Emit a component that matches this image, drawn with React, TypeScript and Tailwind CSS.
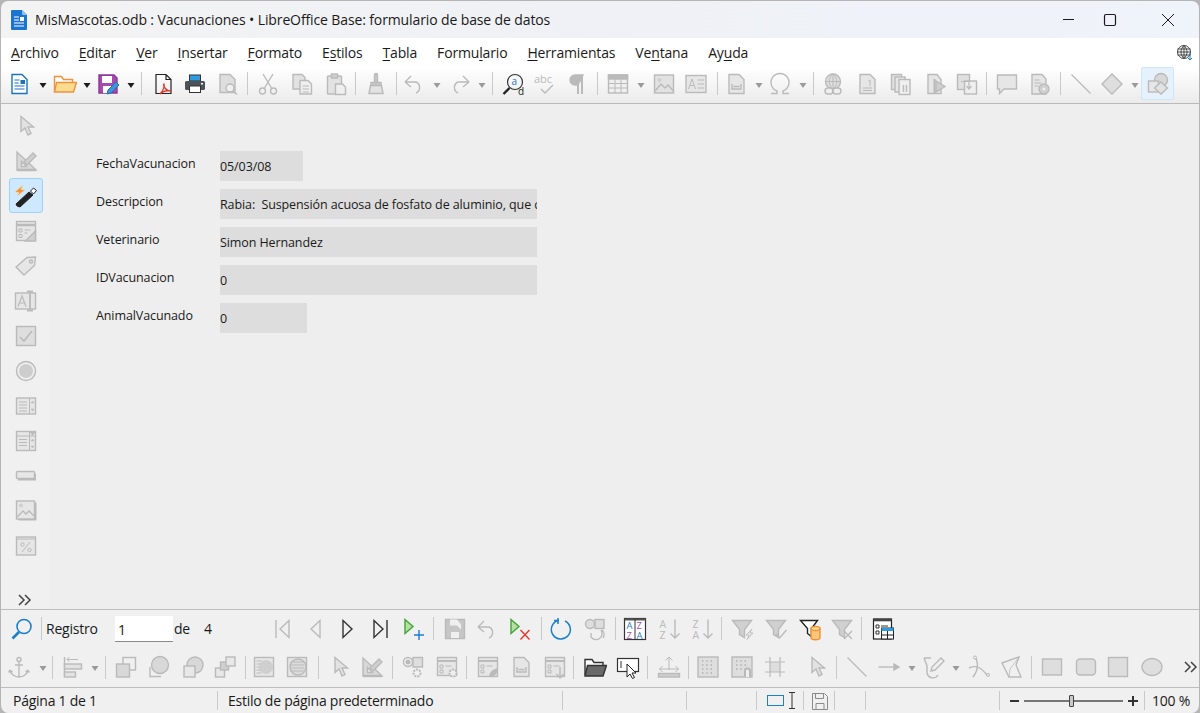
import type { ReactNode } from "react";

type P = { className?: string };

const Svg = ({ className = "", children }: P & { children: ReactNode }) => (
  <svg
    width="24"
    height="24"
    viewBox="0 0 24 24"
    fill="none"
    stroke="#bababa"
    strokeWidth="1.4"
    className={`shrink-0 ${className}`}
  >
    {children}
  </svg>
);

const Sep = ({ className = "" }: P) => <div className={`h-[23px] w-px shrink-0 bg-[#c9c9c9] ${className}`} />;

const Drop = ({ className = "", on }: P & { on?: boolean }) => (
  <svg width="8" height="5" viewBox="0 0 8 5" className={`mt-[3px] shrink-0 ${className}`}>
    <path d="M0.5 0h7L4 5z" fill={on ? "#1c1c1c" : "#9a9a9a"} />
  </svg>
);

/* ---- standard toolbar ---- */
const NewDoc = ({ className }: P) => (
  <Svg className={className}>
    <path d="M5 2.5h10l5 5v14H5z" fill="#fff" stroke="#1b75bc" />
    <path d="M7.5 8h5M7.5 11h4M7.5 14h10M7.5 17h10" stroke="#1b75bc" strokeWidth="1.2" />
    <rect x="13.5" y="8" width="4.5" height="4" fill="#1b75bc" stroke="none" />
  </Svg>
);
const Folder = ({ className }: P) => (
  <Svg className={className}>
    <path d="M1.5 20V4.5h7l2 3h9v3" fill="#fff" stroke="#f0913c" />
    <path d="M1.5 20l2-9.5h20L20.5 20z" fill="#fbdc8e" stroke="#f0913c" />
  </Svg>
);
const Save = ({ className }: P) => (
  <Svg className={className}>
    <path d="M3 3h15l3 3v15H3z" fill="#a64cb0" stroke="#8b3597" />
    <rect x="6" y="4" width="10" height="7" fill="#fff" stroke="none" />
    <rect x="7" y="14" width="8" height="7" fill="#fff" stroke="none" />
    <path d="M11 22l1-4 8-8 3 3-8 8z" fill="#3f93d6" stroke="#1b75bc" strokeWidth="1" />
  </Svg>
);
const Pdf = ({ className }: P) => (
  <Svg className={className}>
    <path d="M5 2.5h10l5 5v14H5zM15 2.5v5h5" stroke="#222" strokeWidth="1.2" />
    <path d="M9 22c3-3 5-8 4-10-1 1 1 7 7 7-3-1-8 0-11 3z" stroke="#e0372d" strokeWidth="1.3" />
  </Svg>
);
const Printer = ({ className }: P) => (
  <Svg className={className}>
    <rect x="6.5" y="3" width="11" height="6" fill="#2c9be0" stroke="#333" strokeWidth="1" />
    <rect x="2" y="9" width="20" height="9" rx="1.5" fill="#4c5258" stroke="none" />
    <rect x="6.5" y="14" width="11" height="6.5" fill="#fff" stroke="#333" strokeWidth="1" />
    <rect x="18" y="11" width="2" height="1.5" fill="#fff" stroke="none" />
  </Svg>
);
const Preview = ({ className }: P) => (
  <Svg className={className}>
    <path d="M4 2.5h10l5 5v13H4z" fill="#dedede" />
    <circle cx="14" cy="16" r="4" fill="#efefef" />
    <path d="M17 19l4 3.5" />
  </Svg>
);
const Cut = ({ className }: P) => (
  <Svg className={className}>
    <path d="M7 2l8.500 14M17 2L8.500 16" />
    <circle cx="6.500" cy="19" r="3" />
    <circle cx="17.500" cy="19" r="3" />
  </Svg>
);
const Copy = ({ className }: P) => (
  <Svg className={className}>
    <path d="M3 2.500h9l3 3V17H3z" fill="#e2e2e2" />
    <path d="M10 8.500h8l3.500 3.500v10H10z" fill="#efefef" />
    <path d="M12.500 14h6.500M12.500 17h6.500M12.500 20h6.500" strokeWidth="1" />
  </Svg>
);
const Paste = ({ className }: P) => (
  <Svg className={className}>
    <rect x="3.500" y="4" width="14" height="18" rx="1" fill="#e2e2e2" />
    <rect x="7.500" y="2" width="6" height="4" fill="#cfcfcf" />
    <path d="M11.500 12h7l3 3v7.500h-10z" fill="#efefef" />
  </Svg>
);
const Brush = ({ className }: P) => (
  <Svg className={className}>
    <rect x="10.500" y="1.500" width="3" height="10" rx="1.500" fill="#c8c8c8" />
    <rect x="7" y="10.500" width="10" height="3" fill="#c8c8c8" />
    <path d="M6.500 13.500h11l1.500 8H5z" fill="#e2e2e2" />
  </Svg>
);
const Undo = ({ className }: P) => (
  <Svg className={className}>
    <path d="M3 10l6-6M3 10l6 5M3 10h11a6 6 0 0 1 0 11" />
  </Svg>
);
const Redo = ({ className }: P) => (
  <Svg className={className}>
    <path d="M21 10l-6-6M21 10l-6 5M21 10H10a6 6 0 0 0 0 11" />
  </Svg>
);
const FindReplace = ({ className }: P) => (
  <Svg className={className}>
    <circle cx="13" cy="10" r="7.500" stroke="#333" strokeWidth="1.200" />
    <path d="M7.500 16L1.500 22" stroke="#222" strokeWidth="2.400" />
    <text x="9.500" y="13" fontSize="10" fontFamily="Open Sans" fill="#1b75bc" stroke="none">a</text>
    <text x="16" y="23" fontSize="10" fontFamily="Open Sans" fill="#222" stroke="none">d</text>
  </Svg>
);
const Spell = ({ className }: P) => (
  <Svg className={className}>
    <text x="1" y="11" fontSize="11" fontFamily="Open Sans" fill="#bababa" stroke="none">abc</text>
    <path d="M8 17l4 4 8-8" />
  </Svg>
);
const Pilcrow = ({ className }: P) => (
  <Svg className={className}>
    <path d="M17 3v19M13 3v19" strokeWidth="2" />
    <path d="M18 3h-8a5 5 0 0 0 0 10h3z" fill="#bababa" />
  </Svg>
);
const Table = ({ className }: P) => (
  <Svg className={className}>
    <rect x="2.500" y="3" width="19" height="18" fill="#efefef" />
    <rect x="2.500" y="3" width="19" height="4" fill="#bababa" />
    <path d="M2.500 11.500h19M2.500 16h19M9 7v14M15 7v14" strokeWidth="1" />
  </Svg>
);
const Image = ({ className }: P) => (
  <Svg className={className}>
    <rect x="2.500" y="3" width="19" height="18" fill="#e2e2e2" />
    <circle cx="7.500" cy="8" r="2" fill="#cfcfcf" stroke="none" />
    <path d="M3 19l6-7 4 4 3-3 5.500 6" />
  </Svg>
);
const TextBox = ({ className }: P) => (
  <Svg className={className}>
    <rect x="2" y="3.500" width="20" height="17" fill="#e6e6e6" />
    <path d="M4.500 17L8 7l3.500 10M6 13.500h4M13.500 8h6.500M13.500 12h6.500M13.500 16h6.500" strokeWidth="1" />
  </Svg>
);
const Field = ({ className }: P) => (
  <Svg className={className}>
    <path d="M5 2.500h10l5 5v14H5z" fill="#e6e6e6" />
    <path d="M8 12v5h9v-5M9.500 14.500h6" />
  </Svg>
);
const Omega = ({ className }: P) => (
  <Svg className={className}>
    <path d="M3 21.500h6v-2.500a9 9 0 1 1 6 0v2.500h6" />
  </Svg>
);
const Hyperlink = ({ className }: P) => (
  <Svg className={className}>
    <circle cx="12" cy="9.500" r="7.500" fill="#dedede" />
    <path d="M4.500 9.500h15M12 2v15M12 2c-5 4-5 11 0 15M12 2c5 4 5 11 0 15" strokeWidth="1" />
    <rect x="4" y="16" width="8" height="6" rx="3" fill="#efefef" />
    <rect x="12" y="16" width="8" height="6" rx="3" fill="#efefef" />
  </Svg>
);
const Footnote = ({ className }: P) => (
  <Svg className={className}>
    <path d="M5 2.500h10l5 5v14H5z" fill="#e6e6e6" />
    <path d="M8 18.500h9M8 16h9M13.500 9l1.500-1v6" strokeWidth="1" />
  </Svg>
);
const IndexDoc = ({ className }: P) => (
  <Svg className={className}>
    <rect x="2.500" y="2.500" width="10" height="15" fill="#e0e0e0" />
    <rect x="6" y="5" width="10" height="15" fill="#e6e6e6" />
    <rect x="10" y="7.500" width="11" height="15" fill="#efefef" />
    <path d="M14.500 13v7M17.500 13v7" />
  </Svg>
);
const Bookmark = ({ className }: P) => (
  <Svg className={className}>
    <path d="M5 2.500h9l4 5v14H5z" fill="#e6e6e6" />
    <path d="M11.500 7v15" strokeWidth="2" />
    <path d="M13 9l9 5.500-9 5.500z" fill="#cfcfcf" />
  </Svg>
);
const CrossRef = ({ className }: P) => (
  <Svg className={className}>
    <rect x="2.500" y="2.500" width="12" height="15" fill="#e0e0e0" />
    <rect x="9.500" y="9" width="12" height="13" fill="#efefef" />
    <path d="M6 9.500h8v7M11.500 14l2.500 3 2.500-3" strokeWidth="1.200" />
  </Svg>
);
const Comment = ({ className }: P) => (
  <Svg className={className}>
    <path d="M2.500 3h19v14H9l-4.500 4.500V17h-2z" fill="#e6e6e6" />
  </Svg>
);
const Track = ({ className }: P) => (
  <Svg className={className}>
    <path d="M4 2.500h10l4 4.500v15H4z" fill="#e6e6e6" />
    <path d="M6.500 8h5M6.500 11h7M6.500 14h4" strokeWidth="1" />
    <circle cx="16" cy="17" r="5" fill="#cfcfcf" />
    <circle cx="16" cy="17" r="1.500" fill="#efefef" stroke="none" />
  </Svg>
);
const Line = ({ className }: P) => (
  <Svg className={className}>
    <path d="M2.500 2.500l19 19" strokeWidth="1.200" />
  </Svg>
);
const Diamond = ({ className }: P) => (
  <Svg className={className}>
    <path d="M12 2l10 10-10 10L2 12z" fill="#dedede" />
  </Svg>
);
const Shapes = ({ className }: P) => (
  <Svg className={className}>
    <circle cx="15" cy="8" r="6.500" fill="#d8d8d8" />
    <rect x="2.500" y="9" width="10" height="11" fill="#e6e6e6" />
    <path d="M15 10l6.500 6-6.500 6-6.500-6z" fill="#e2e2e2" />
  </Svg>
);

/* ---- form design ---- */
const Pointer = ({ className }: P) => (
  <Svg className={className}>
    <path d="M7 2.500v15l4-3.500 3 7 3-1.500-3-6.500h5.500z" fill="#e2e2e2" />
  </Svg>
);
const DesignMode = ({ className }: P) => (
  <Svg className={className}>
    <path d="M3 3v18h19l-4-4z" fill="#d8d8d8" />
    <path d="M7.500 12.500v5h5z" fill="#efefef" />
    <path d="M10 13L19 4l3 3-9 9z" fill="#cfcfcf" />
    <path d="M3 21h19" strokeWidth="2.400" />
  </Svg>
);
const Wizard = ({ className }: P) => (
  <Svg className={className}>
    <path d="M3 22l-1-2L15 8l4 3L6 23z" fill="#222" stroke="#222" strokeWidth="1" />
    <path d="M16.500 7l3-3 3 2.500-3 3.500z" fill="#fff" stroke="#222" strokeWidth="1" />
    <path d="M9 1L1 8l4 .500L3 12l8-6-4-.500z" fill="#f0913c" stroke="#fbdc8e" strokeWidth="0.600" />
  </Svg>
);
const FormProps = ({ className }: P) => (
  <Svg className={className}>
    <rect x="2.500" y="2.500" width="19" height="19" fill="#e6e6e6" />
    <path d="M2.500 6h19" strokeWidth="2.400" />
    <path d="M5 10h3v3H5zM5 15.500h3v3H5zM10.500 11h6M10.500 14h3" strokeWidth="1" />
    <path d="M21.500 12v10h-10z" fill="#cfcfcf" />
  </Svg>
);
const Tag = ({ className }: P) => (
  <Svg className={className}>
    <path d="M2 13L13 3.500l8.500-.500-1 8.500L10 21z" fill="#e6e6e6" />
    <circle cx="17" cy="7.500" r="1.500" fill="#efefef" />
  </Svg>
);
const TextField = ({ className }: P) => (
  <Svg className={className}>
    <rect x="1.500" y="4" width="20" height="16" fill="#e6e6e6" />
    <path d="M4 17.500L8 7l4 10.500M5.500 14h5" strokeWidth="1.200" />
    <path d="M13 2.500h6M13 21.500h6M16 2.500v19" strokeWidth="1.800" />
  </Svg>
);
const CheckBox = ({ className }: P) => (
  <Svg className={className}>
    <rect x="2.500" y="2.500" width="19" height="19" fill="#dedede" />
    <path d="M6 13l4 4 8-10" strokeWidth="1.600" />
  </Svg>
);
const Radio = ({ className }: P) => (
  <Svg className={className}>
    <circle cx="12" cy="12" r="9.500" fill="#efefef" />
    <circle cx="12" cy="12" r="7" fill="#cdcdcd" stroke="none" />
  </Svg>
);
const ListBox = ({ className }: P) => (
  <Svg className={className}>
    <rect x="2.500" y="4" width="19" height="16" fill="#e6e6e6" />
    <path d="M15.500 4v16M5 8h8M5 11h8M5 14h8M5 17h8" strokeWidth="1" />
    <path d="M17 9l1.500-2 1.500 2zM17 15l1.500 2 1.500-2z" fill="#bababa" strokeWidth="0.500" />
  </Svg>
);
const ComboBox = ({ className }: P) => (
  <Svg className={className}>
    <rect x="2.500" y="2.500" width="19" height="19" fill="#e6e6e6" />
    <path d="M15.500 2.500v19M2.500 7h19M5 10.500h8M5 13.500h8M5 16.500h8" strokeWidth="1" />
    <path d="M16 3l2.500 3.500L21 3z" fill="#bababa" strokeWidth="0.500" />
    <path d="M17 12l1.500-2 1.500 2zM17 17l1.500 2 1.500-2z" fill="#bababa" strokeWidth="0.500" />
  </Svg>
);
const PushButton = ({ className }: P) => (
  <Svg className={className}>
    <rect x="4" y="9.500" width="18" height="7" fill="#bababa" stroke="none" />
    <rect x="2.500" y="7.500" width="18" height="7" rx="1" fill="#e6e6e6" />
  </Svg>
);
const ImageButton = ({ className }: P) => (
  <Svg className={className}>
    <rect x="4.500" y="3.500" width="18" height="18" fill="#bababa" stroke="none" />
    <rect x="2.500" y="2" width="18" height="18" fill="#e6e6e6" />
    <circle cx="7" cy="6.500" r="2" fill="#cfcfcf" stroke="none" />
    <path d="M3 18l6-6 3 3 3-3 5 5" />
  </Svg>
);
const Formatted = ({ className }: P) => (
  <Svg className={className}>
    <rect x="2.500" y="3" width="19" height="18" fill="#e6e6e6" />
    <path d="M2.500 5h19M8 18l8-10" strokeWidth="1" />
    <circle cx="8.500" cy="10.500" r="1.700" strokeWidth="1" />
    <circle cx="15.500" cy="16" r="1.700" strokeWidth="1" />
  </Svg>
);
const Chevrons = ({ className = "", w = 24 }: P & { w?: number }) => (
  <svg width={w} height="24" viewBox={`0 0 ${w} 24`} fill="none" stroke="#444" strokeWidth="1.500" className={`shrink-0 ${className}`}>
    <path d={`M${w / 2 - 6} 7l5 5-5 5M${w / 2} 7l5 5-5 5`} />
  </svg>
);

/* ---- record bar ---- */
const Search = ({ className }: P) => (
  <Svg className={className}>
    <circle cx="14" cy="9.500" r="7" stroke="#1b7fcc" strokeWidth="1.600" />
    <path d="M9 15l-6.500 6.500" stroke="#1b7fcc" strokeWidth="2.600" />
  </Svg>
);
const NavFirst = ({ className }: P) => (
  <Svg className={className}>
    <path d="M5 3v18" />
    <path d="M18 3.500L9 12l9 8.500z" />
  </Svg>
);
const NavPrev = ({ className }: P) => (
  <Svg className={className}>
    <path d="M17 3.500L8 12l9 8.500z" />
  </Svg>
);
const NavNext = ({ className }: P) => (
  <Svg className={className}>
    <path d="M7 3.500l9 8.500-9 8.500z" stroke="#333" />
  </Svg>
);
const NavLast = ({ className }: P) => (
  <Svg className={className}>
    <path d="M6 3.500l9 8.500-9 8.500z" stroke="#333" />
    <path d="M19 3v18" stroke="#333" />
  </Svg>
);
const NavNew = ({ className }: P) => (
  <Svg className={className}>
    <path d="M3 2.500l8 7-8 7z" fill="#b7dfa5" stroke="#3fa535" />
    <path d="M17 13v10M12 18h10" stroke="#1b7fcc" />
  </Svg>
);
const SaveRecord = ({ className }: P) => (
  <Svg className={className}>
    <path d="M2.500 2.500h19v19h-19z" fill="#c6c6c6" />
    <path d="M7 2.500h7l4 5v5l-4-4H7z" fill="#efefef" stroke="none" />
    <rect x="8" y="15" width="8" height="6" fill="#efefef" stroke="none" />
  </Svg>
);
const DelRecord = ({ className }: P) => (
  <Svg className={className}>
    <path d="M3 2.500l8 7-8 7z" fill="#b7dfa5" stroke="#3fa535" />
    <path d="M12.500 13l9 9.500M21.500 13l-9 9.500" stroke="#e0372d" />
  </Svg>
);
const Refresh = ({ className }: P) => (
  <Svg className={className}>
    <path d="M9 3.500A9.500 9.500 0 1 0 16 4" stroke="#1b7fcc" strokeWidth="1.500" />
    <path d="M9 1v6M5 3.500h5" stroke="#1b7fcc" strokeWidth="1.500" />
  </Svg>
);
const RefreshCtl = ({ className }: P) => (
  <Svg className={className}>
    <circle cx="7" cy="7" r="4.500" fill="#dedede" />
    <rect x="12" y="2.500" width="9" height="9" fill="#dedede" />
    <path d="M8 20a6 6 0 0 0 10-7M8 20v-4M20 21a6 6 0 0 0-1-8" />
  </Svg>
);
const Sort = ({ className }: P) => (
  <Svg className={className}>
    <rect x="1.500" y="1.500" width="21" height="21" fill="#fff" stroke="#333" strokeWidth="1.200" />
    <path d="M1.500 2.500h21" stroke="#555" strokeWidth="2" />
    <path d="M12 2v20" stroke="#333" strokeWidth="1" />
    <text x="3.500" y="12" fontSize="9.500" fontFamily="Open Sans" fill="#1b7fcc" stroke="none">A</text>
    <text x="3.500" y="21.500" fontSize="9.500" fontFamily="Open Sans" fill="#a64cb0" stroke="none">Z</text>
    <text x="13.500" y="12" fontSize="9.500" fontFamily="Open Sans" fill="#a64cb0" stroke="none">Z</text>
    <text x="13.500" y="21.500" fontSize="9.500" fontFamily="Open Sans" fill="#1b7fcc" stroke="none">A</text>
  </Svg>
);
const SortAZ = ({ top, bottom, className }: P & { top: string; bottom: string }) => (
  <Svg className={className}>
    <text x="1.500" y="11" fontSize="10.500" fontFamily="Open Sans" fill="#bababa" stroke="none">{top}</text>
    <text x="1.500" y="22" fontSize="10.500" fontFamily="Open Sans" fill="#bababa" stroke="none">{bottom}</text>
    <path d="M17 2.500V21M12.500 16.500L17 21l4.500-4.500" />
  </Svg>
);
const FunnelPath = "M1.500 3.500h19l-7 9v8l-5-3v-5z";
const AutoFilter = ({ className }: P) => (
  <Svg className={className}>
    <path d={FunnelPath} fill="#d0d0d0" />
    <path d="M21 12l-6 6 3 .500-2 4 6-6.500-3-.500z" fill="#e2e2e2" strokeWidth="0.800" />
  </Svg>
);
const StdFilter = ({ className }: P) => (
  <Svg className={className}>
    <path d={FunnelPath} fill="#d0d0d0" />
    <path d="M11 17l3.500 4 7-8" />
  </Svg>
);
const DbFilter = ({ className }: P) => (
  <Svg className={className}>
    <path d="M1.500 3.500h17l-6 8v8l-4-3v-5z" fill="#fff" stroke="#222" />
    <path d="M12 11.500v9a4 2 0 0 0 9 0v-9z" fill="#fbc67a" stroke="#f0913c" />
    <ellipse cx="16.500" cy="11.500" rx="4.500" ry="2" fill="#fbdc8e" stroke="#f0913c" />
  </Svg>
);
const RemoveFilter = ({ className }: P) => (
  <Svg className={className}>
    <path d={FunnelPath} fill="#d0d0d0" />
    <path d="M13 14l8 8M21 14l-8 8" />
  </Svg>
);
const DataTable = ({ className }: P) => (
  <Svg className={className}>
    <rect x="2.500" y="2" width="18" height="20" fill="#fff" stroke="#222" strokeWidth="1.200" />
    <path d="M2.500 3h18" stroke="#444" strokeWidth="2.600" />
    <path d="M5 8h3v3H5zM5 14h3v3H5zM10 9h7" stroke="#333" strokeWidth="1" />
    <rect x="10.500" y="11" width="12" height="11" fill="#fff" stroke="#222" strokeWidth="1" />
    <rect x="10.500" y="11" width="12" height="3" fill="#2c9be0" stroke="none" />
    <path d="M16.500 14v8M10.500 18h12" stroke="#222" strokeWidth="1" />
  </Svg>
);

/* ---- form design bar ---- */
const Anchor = ({ className }: P) => (
  <Svg className={className}>
    <circle cx="12" cy="4.500" r="2" />
    <path d="M12 6.500V22M8 10h8M3 15c0 4 5 7 9 7s9-3 9-7M3 15l-1.500 2.500M3 15l2.500 2M21 15l1.500 2.500M21 15l-2.500 2" />
  </Svg>
);
const Align = ({ className }: P) => (
  <Svg className={className}>
    <path d="M3.500 2v20" />
    <rect x="3.500" y="9" width="17" height="5" fill="#e2e2e2" />
    <rect x="3.500" y="17" width="11" height="5" fill="#e2e2e2" />
    <path d="M6 4.500h11M6 4.500l2.500-2.500M6 4.500L8.500 7" strokeWidth="1" />
  </Svg>
);
const ToFront = ({ className }: P) => (
  <Svg className={className}>
    <rect x="9" y="2.500" width="12.500" height="12.500" />
    <rect x="2.500" y="9" width="13" height="13" fill="#d8d8d8" />
  </Svg>
);
const ToBack = ({ className }: P) => (
  <Svg className={className}>
    <circle cx="13" cy="10" r="8.500" fill="#d8d8d8" />
    <path d="M3 12v9.500h11" />
  </Svg>
);
const Forward = ({ className }: P) => (
  <Svg className={className}>
    <circle cx="14" cy="10" r="8" fill="#d8d8d8" />
    <rect x="3" y="11" width="11" height="11" fill="#e8e8e8" />
  </Svg>
);
const Backward = ({ className }: P) => (
  <Svg className={className}>
    <rect x="2.500" y="13" width="9" height="9" fill="#e8e8e8" />
    <rect x="7.500" y="7" width="8" height="8" fill="#cfcfcf" />
    <rect x="13" y="2" width="9" height="9" fill="#e8e8e8" />
  </Svg>
);
const WrapL = ({ className }: P) => (
  <Svg className={className}>
    <rect x="2.500" y="2.500" width="19" height="19" fill="#e6e6e6" />
    <circle cx="14" cy="12" r="7" fill="#cfcfcf" stroke="none" />
    <path d="M4.500 6h5M4.500 9h4M4.500 12h3M4.500 15h4M4.500 18h5" strokeWidth="1" />
  </Svg>
);
const WrapR = ({ className }: P) => (
  <Svg className={className}>
    <rect x="2.500" y="2.500" width="19" height="19" fill="#e6e6e6" />
    <circle cx="13" cy="12" r="8" fill="#dcdcdc" />
    <path d="M5 7h14M5 10h14M5 13h14M5 16h14" strokeWidth="1" />
  </Svg>
);
const ControlProps = ({ className }: P) => (
  <Svg className={className}>
    <circle cx="7" cy="7" r="4.500" />
    <circle cx="7" cy="7" r="2.500" fill="#bababa" stroke="none" />
    <rect x="12" y="2.500" width="9.500" height="9.500" fill="#dedede" />
    <circle cx="16" cy="18" r="3.500" strokeDasharray="2 1" strokeWidth="2" />
  </Svg>
);
const FormProp2 = ({ className }: P) => (
  <Svg className={className}>
    <rect x="2.500" y="2.500" width="19" height="18" fill="#e6e6e6" />
    <path d="M2.500 6h19" strokeWidth="2" />
    <path d="M5 10h3v3H5zM5 15h3v3H5zM10.500 11h6" strokeWidth="1" />
    <circle cx="18" cy="18" r="3.500" fill="#efefef" strokeDasharray="2 1" strokeWidth="2" />
  </Svg>
);
const FormLeaf = ({ className }: P) => (
  <Svg className={className}>
    <rect x="2.500" y="2.500" width="19" height="19" fill="#e6e6e6" />
    <path d="M2.500 6h19" strokeWidth="2" />
    <path d="M5 10h3v3H5zM5 15h3v3H5zM10.500 11h6" strokeWidth="1" />
    <path d="M13 22c0-5 4-8 9-9 0 5-3 9-9 9z" fill="#bababa" stroke="none" />
  </Svg>
);
const FormDown = ({ className }: P) => (
  <Svg className={className}>
    <rect x="2.500" y="2.500" width="19" height="19" fill="#e6e6e6" />
    <path d="M2.500 6h19" strokeWidth="2" />
    <path d="M5 10h3v3H5zM5 15h3v3H5zM10.500 11h6" strokeWidth="1" />
    <path d="M17 12v11M13.500 19l3.500 4 3.500-4" />
  </Svg>
);
const OpenFolder = ({ className }: P) => (
  <Svg className={className}>
    <path d="M2 20V4.500h7l2 3h9v3" fill="#fff" stroke="#333" />
    <path d="M2 21l2.500-10.500h19L20 21z" fill="#6a6a6a" stroke="#333" />
  </Svg>
);
const SelectCursor = ({ className }: P) => (
  <Svg className={className}>
    <rect x="1.500" y="3.500" width="21" height="13" fill="#fff" stroke="#333" strokeWidth="1.200" />
    <path d="M5 6v7" stroke="#333" strokeWidth="1" />
    <path d="M11 9v13l3-3 2.500 4.500 2-1-2.500-4.500h4z" fill="#fff" stroke="#222" strokeWidth="1" />
  </Svg>
);
const Position = ({ className }: P) => (
  <Svg className={className}>
    <path d="M12 2v13M8.500 5.500L12 2l3.500 3.500M2.500 14h19M2.500 14l3-3M2.500 14l3 3M21.500 14l-3-3M21.500 14l-3 3" strokeWidth="1" />
    <rect x="1.500" y="18.500" width="21" height="3.500" fill="#cfcfcf" />
  </Svg>
);
const Grid = ({ className }: P) => (
  <Svg className={className}>
    <rect x="2" y="2" width="20" height="20" fill="#dedede" />
    <path d="M6 6h12M6 10h12M6 14h12M6 18h12" strokeWidth="1.400" strokeDasharray="1.400 2.900" stroke="#b0b0b0" />
  </Svg>
);
const SnapGrid = ({ className }: P) => (
  <Svg className={className}>
    <path d="M2 2h20v20H2z" fill="#dedede" />
    <path d="M6 6h12M6 10h12M6 14h12" strokeWidth="1.400" strokeDasharray="1.400 2.900" stroke="#b0b0b0" />
    <path d="M15 22v-6a2.500 2.500 0 0 1 5 0v6" fill="#efefef" strokeWidth="2" />
  </Svg>
);
const HelpLines = ({ className }: P) => (
  <Svg className={className}>
    <rect x="7" y="7" width="10" height="10" fill="#dedede" stroke="none" />
    <path d="M7 2v20M17 2v20M2 7h20M2 17h20" strokeWidth="1.200" />
  </Svg>
);
const ArrowLine = ({ className }: P) => (
  <Svg className={className}>
    <path d="M1.500 12h17" />
    <path d="M17 9l5 3-5 3z" fill="#bababa" />
  </Svg>
);
const Draw = ({ className }: P) => (
  <Svg className={className}>
    <path d="M2 3h7M2 3l3 8v7a6 6 0 0 0 11 2" />
    <path d="M9 16l1-4 9-9 3 3-9 9z" fill="#efefef" />
  </Svg>
);
const Curve = ({ className }: P) => (
  <Svg className={className}>
    <path d="M2 13C10 9 15 14 20 20M8 2c4 6 3 14-2 20" />
    <circle cx="8" cy="2.500" r="1.500" fill="#efefef" strokeWidth="1" />
    <circle cx="21" cy="20" r="1.500" fill="#efefef" strokeWidth="1" />
  </Svg>
);
const Polygon = ({ className }: P) => (
  <Svg className={className}>
    <path d="M2 8l17-6-3 8 5 12H9z" />
    <path d="M19 2l-9 12-1 8" strokeWidth="0.800" />
  </Svg>
);
const Rect = ({ className }: P) => (
  <Svg className={className}>
    <rect x="2.500" y="4" width="19" height="16" fill="#dedede" />
  </Svg>
);
const RoundRect = ({ className }: P) => (
  <Svg className={className}>
    <rect x="2.500" y="4" width="19" height="16" rx="3.500" fill="#dedede" />
  </Svg>
);
const Square = ({ className }: P) => (
  <Svg className={className}>
    <rect x="2.500" y="2.500" width="19" height="19" fill="#dedede" />
  </Svg>
);
const Ellipse = ({ className }: P) => (
  <Svg className={className}>
    <ellipse cx="12" cy="12" rx="10" ry="8.500" fill="#dedede" />
  </Svg>
);

const AppIcon = () => (
  <svg width="16" height="20" viewBox="0 0 16 20" className="shrink-0">
    <path d="M1 0h10l5 5v14a1 1 0 0 1-1 1H1a1 1 0 0 1-1-1V1a1 1 0 0 1 1-1z" fill="#1b75d0" />
    <path d="M11 0l5 5h-4a1 1 0 0 1-1-1z" fill="#8fc1ef" />
    <path d="M3 7h5M3 10h5M3 13h10M3 16h10" stroke="#fff" strokeWidth="1.200" />
    <rect x="9" y="7" width="4" height="4" fill="#fff" />
  </svg>
);

const menus: [string, string, string][] = [
  ["", "A", "rchivo"],
  ["", "E", "ditar"],
  ["", "V", "er"],
  ["", "I", "nsertar"],
  ["", "F", "ormato"],
  ["E", "s", "tilos"],
  ["", "T", "abla"],
  ["Formu", "l", "ario"],
  ["", "H", "erramientas"],
  ["Ve", "n", "tana"],
  ["Ay", "u", "da"],
];

const fields = [
  { label: "FechaVacunacion", value: "05/03/08", box: "w-[83px]" },
  { label: "Descripcion", value: "Rabia:  Suspensión acuosa de fosfato de aluminio, que contiene", box: "w-[317px]" },
  { label: "Veterinario", value: "Simon Hernandez", box: "w-[317px]" },
  { label: "IDVacunacion", value: "0", box: "w-[317px]" },
  { label: "AnimalVacunado", value: "0", box: "w-[87px]" },
];

const sidebar = [Pointer, DesignMode, Wizard, FormProps, Tag, TextField, CheckBox, Radio, ListBox, ComboBox, PushButton, ImageButton, Formatted];

export default function App() {
  return (
    <div className="flex h-[713px] w-[1200px] flex-col overflow-hidden bg-[#b5b5b5] font-['Open_Sans','Noto_Sans',sans-serif] text-[#1a1a1a]">
      <div className="flex h-full flex-col overflow-hidden rounded-[8px] border-x border-t border-[#b5b5b5]">
        {/* title bar */}
        <div className="flex h-[37px] shrink-0 items-center bg-gradient-to-r from-[#f3f3f3] via-[#eff1f6] to-[#eff3fa] pl-[10px]">
          <AppIcon />
          <span className="ml-[8px] whitespace-pre text-[14px] tracking-[-0.12px]">
            MisMascotas.odb : Vacunaciones • LibreOffice Base: formulario de base de datos
          </span>
          <div className="ml-auto flex items-center">
            <svg width="46" height="20" viewBox="0 0 46 20" fill="none" stroke="#1a1a1a" className="shrink-0">
              <path d="M17 9.500h11" />
            </svg>
            <svg width="14" height="14" viewBox="0 0 14 14" fill="none" stroke="#1a1a1a" strokeWidth="1.200" className="ml-[11px] shrink-0">
              <rect x="1.500" y="1.500" width="11" height="11" rx="1.500" />
            </svg>
            <svg width="14" height="14" viewBox="0 0 14 14" fill="none" stroke="#1a1a1a" className="ml-[44px] mr-[24px] shrink-0">
              <path d="M1 1l12 12M13 1L1 13" />
            </svg>
          </div>
        </div>

        {/* menu bar */}
        <div className="flex h-[29px] shrink-0 items-center bg-white pl-[10px] text-[14px] tracking-[-0.16px]">
          {menus.map(([a, u, b], i) => (
            <span key={i} className="mr-[20px] whitespace-pre">
              {a}
              <span className="underline underline-offset-2">{u}</span>
              {b}
            </span>
          ))}
          <svg width="18" height="18" viewBox="0 0 18 18" fill="none" stroke="#444" strokeWidth="1" className="ml-auto mr-[5px] shrink-0">
            <circle cx="8" cy="8" r="6.500" />
            <path d="M1.500 8h13M1.500 5h13M1.500 11h13M8 1.500v13M8 1.500c-4 4-4 9 0 13M8 1.500c4 4 4 9 0 13" />
            <path d="M14 9v7M12 14l2 2 2-2" stroke="#1b7fcc" />
          </svg>
        </div>

        {/* standard toolbar */}
        <div className="flex h-[37px] shrink-0 items-center border-b border-[#b9b9b9] bg-gradient-to-b from-white to-[#ebebeb] pb-[3px]">
          <NewDoc className="ml-[6px]" />
          <Drop on className="ml-[8px]" />
          <Folder className="ml-[6px]" />
          <Drop on className="ml-[6px]" />
          <Save className="ml-[5px]" />
          <Drop on className="ml-[7px]" />
          <Sep className="ml-[6px]" />
          <Pdf className="ml-[9px]" />
          <Printer className="ml-[8px]" />
          <Preview className="ml-[9px]" />
          <Sep className="ml-[7px]" />
          <Cut className="ml-[8px]" />
          <Copy className="ml-[10px]" />
          <Paste className="ml-[10px]" />
          <Sep className="ml-[7px]" />
          <Brush className="ml-[8px]" />
          <Sep className="ml-[8px]" />
          <Undo className="ml-[5px]" />
          <Drop className="ml-[7px]" />
          <Redo className="ml-[7px]" />
          <Drop className="ml-[6px]" />
          <Sep className="ml-[6px]" />
          <FindReplace className="ml-[9px]" />
          <Spell className="ml-[7px]" />
          <Pilcrow className="ml-[8px]" />
          <Sep className="ml-[8px]" />
          <Table className="ml-[8px]" />
          <Drop className="ml-[7px]" />
          <Image className="ml-[7px]" />
          <TextBox className="ml-[8px]" />
          <Sep className="ml-[9px]" />
          <Field className="ml-[6px]" />
          <Drop className="ml-[7px]" />
          <Omega className="ml-[5px]" />
          <Drop className="ml-[7px]" />
          <Sep className="ml-[6px]" />
          <Hyperlink className="ml-[7px]" />
          <Footnote className="ml-[10px]" />
          <IndexDoc className="ml-[10px]" />
          <Bookmark className="ml-[10px]" />
          <CrossRef className="ml-[8px]" />
          <Sep className="ml-[7px]" />
          <Comment className="ml-[8px]" />
          <Track className="ml-[9px]" />
          <Sep className="ml-[8px]" />
          <Line className="ml-[8px]" />
          <Diamond className="ml-[7px]" />
          <Drop className="ml-[7px]" />
          <div className="ml-[2px] flex h-[33px] w-[33px] shrink-0 items-center justify-center rounded-[2px] border border-[#cfe6fa] bg-[#e5f1fb]">
            <Shapes />
          </div>
        </div>

        {/* sidebar + form */}
        <div className="flex min-h-0 flex-1">
          <div className="flex w-[49px] shrink-0 flex-col items-center bg-[#f0f0f0] pl-[-1px] pt-[4px]">
            {sidebar.map((Icon, i) =>
              i === 2 ? (
                <div key={i} className="flex h-[35px] w-[34px] shrink-0 items-center justify-center rounded-[3px] border border-[#9fd0f5] bg-[#cde8ff]">
                  <Icon />
                </div>
              ) : (
                <div key={i} className="flex h-[35px] w-[34px] shrink-0 items-center justify-center">
                  <Icon />
                </div>
              ),
            )}
            <Chevrons className="mt-auto mb-[-3px] mr-[2px]" />
          </div>
          <div className="flex-1 bg-[#eeeeee] pl-[46px] pt-[47px] text-[12.5px] tracking-[-0.1px]">
            <div className="flex flex-col gap-[8px]">
              {fields.map((f) => (
                <div key={f.label} className="flex h-[30px] items-center">
                  <span className="mb-[3px] w-[124px] shrink-0 whitespace-pre">{f.label}</span>
                  <div className={`flex h-full shrink-0 items-center overflow-hidden whitespace-pre bg-[#dddddd] pt-[2px] ${f.box}`}>
                    {f.value}
                  </div>
                </div>
              ))}
            </div>
          </div>
        </div>

        {/* record bar */}
        <div className="flex h-[38px] shrink-0 items-center border-t border-[#bdbdbd] bg-[#f0f0f0] text-[14px] tracking-[-0.2px]">
          <Search className="ml-[9px]" />
          <Sep className="ml-[7px]" />
          <span className="ml-[4px] w-[69px] shrink-0">Registro</span>
          <div className="h-[26px] w-[58px] shrink-0 border-b border-[#8a8a8a] bg-white pl-[3px] pt-[3px]">1</div>
          <span className="ml-px w-[30px] shrink-0">de</span>
          <span className="w-[10px] shrink-0">4</span>
          <NavFirst className="ml-[57px]" />
          <NavPrev className="ml-[8px]" />
          <NavNext className="ml-[9px]" />
          <NavLast className="ml-[8px]" />
          <NavNew className="ml-[10px]" />
          <Sep className="ml-[7px]" />
          <SaveRecord className="ml-[9px]" />
          <Undo className="ml-[8px]" />
          <DelRecord className="ml-[9px]" />
          <Sep className="ml-[9px]" />
          <Refresh className="ml-[7px]" />
          <RefreshCtl className="ml-[10px]" />
          <Sep className="ml-[8px]" />
          <Sort className="ml-[7px]" />
          <SortAZ top="A" bottom="Z" className="ml-[11px]" />
          <SortAZ top="Z" bottom="A" className="ml-[9px]" />
          <Sep className="ml-[6px]" />
          <AutoFilter className="ml-[9px]" />
          <StdFilter className="ml-[10px]" />
          <DbFilter className="ml-[10px]" />
          <RemoveFilter className="ml-[8px]" />
          <Sep className="ml-[6px]" />
          <DataTable className="ml-[9px]" />
        </div>

        {/* form design bar */}
        <div className="flex h-[40px] shrink-0 items-center bg-[#f0f0f0]">
          <Anchor className="ml-[6px]" />
          <Drop className="ml-[8px]" />
          <Sep className="ml-[5px]" />
          <Align className="ml-[8px]" />
          <Drop className="ml-[6px]" />
          <Sep className="ml-[6px]" />
          <ToFront className="ml-[8px]" />
          <ToBack className="ml-[9px]" />
          <Forward className="ml-[10px]" />
          <Backward className="ml-[8px]" />
          <Sep className="ml-[8px]" />
          <WrapL className="ml-[6px]" />
          <WrapR className="ml-[9px]" />
          <Sep className="ml-[9px]" />
          <Pointer className="ml-[9px]" />
          <DesignMode className="ml-[8px]" />
          <Sep className="ml-[8px]" />
          <ControlProps className="ml-[8px]" />
          <FormProp2 className="ml-[10px]" />
          <Sep className="ml-[7px]" />
          <FormLeaf className="ml-[9px]" />
          <Field className="ml-[9px]" />
          <FormDown className="ml-[10px]" />
          <Sep className="ml-[6px]" />
          <OpenFolder className="ml-[9px]" />
          <SelectCursor className="ml-[9px]" />
          <Sep className="ml-[7px]" />
          <Position className="ml-[9px]" />
          <Sep className="ml-[7px]" />
          <Grid className="ml-[7px]" />
          <SnapGrid className="ml-[10px]" />
          <HelpLines className="ml-[9px]" />
          <Pointer className="ml-[18px]" />
          <Sep className="ml-[7px]" />
          <Line className="ml-[8px]" />
          <ArrowLine className="ml-[8px]" />
          <Drop className="ml-[7px]" />
          <Draw className="ml-[6px]" />
          <Drop className="ml-[6px]" />
          <Curve className="ml-[7px]" />
          <Polygon className="ml-[9px]" />
          <Sep className="ml-[7px]" />
          <Rect className="ml-[8px]" />
          <RoundRect className="ml-[10px]" />
          <Square className="ml-[8px]" />
          <Ellipse className="ml-[10px]" />
          <Chevrons w={16} className="ml-[19px]" />
        </div>

        {/* status bar */}
        <div className="flex h-[26px] shrink-0 items-stretch border-t border-[#bdbdbd] bg-[#f0f0f0] text-[14px] tracking-[-0.25px]">
          <div className="flex w-[216px] shrink-0 items-center pl-[12px]">Página 1 de 1</div>
          <div className="my-[3px] flex w-[345px] shrink-0 items-center border-l border-[#c9c9c9] pl-[10px]">
            Estilo de página predeterminado
          </div>
          <div className="my-[3px] w-[124px] shrink-0 border-l border-[#c9c9c9]" />
          <div className="my-[3px] w-[70px] shrink-0 border-l border-[#c9c9c9]" />
          <div className="my-[3px] flex w-[47px] shrink-0 items-center border-l border-[#c9c9c9] pl-[10px]">
            <span className="h-[11px] w-[17px] shrink-0 border border-[#1b7fcc]" />
            <svg width="8" height="17" viewBox="0 0 8 17" fill="none" stroke="#333" className="ml-[4px] shrink-0">
              <path d="M1 .500h6M1 16.500h6M4 .500v16" />
            </svg>
          </div>
          <div className="my-[3px] flex w-[31px] shrink-0 items-center border-l border-[#c9c9c9] pl-[8px]">
            <svg width="16" height="18" viewBox="0 0 16 18" fill="none" stroke="#8a8a8a" className="shrink-0">
              <path d="M.500 1.500h12l3 3v13H.500z" />
              <path d="M3.500 1.500v5h8v-5M4 17.500v-6h8v6" />
            </svg>
          </div>
          <div className="my-[3px] w-[31px] shrink-0 border-l border-[#c9c9c9]" />
          <div className="my-[3px] w-[134px] shrink-0 border-l border-[#c9c9c9]" />
          <div className="my-[3px] flex w-[145px] shrink-0 items-center border-l border-[#c9c9c9] pl-[10px]">
            <span className="h-[2px] w-[9px] shrink-0 bg-[#333]" />
            <div className="relative ml-[5px] h-[2px] w-[99px] shrink-0 bg-[#777]">
              <span className="absolute left-[45px] top-[-5px] h-[12px] w-[5px] rounded-[1px] border border-[#444] bg-[#c9c9c9]" />
            </div>
            <span className="relative ml-[5px] h-[2px] w-[10px] shrink-0 bg-[#333]">
              <span className="absolute left-[4px] top-[-4px] h-[10px] w-[2px] bg-[#333]" />
            </span>
          </div>
          <div className="my-[3px] flex flex-1 items-center border-l border-[#c9c9c9] pl-[7px]">100 %</div>
        </div>
      </div>
    </div>
  );
}
